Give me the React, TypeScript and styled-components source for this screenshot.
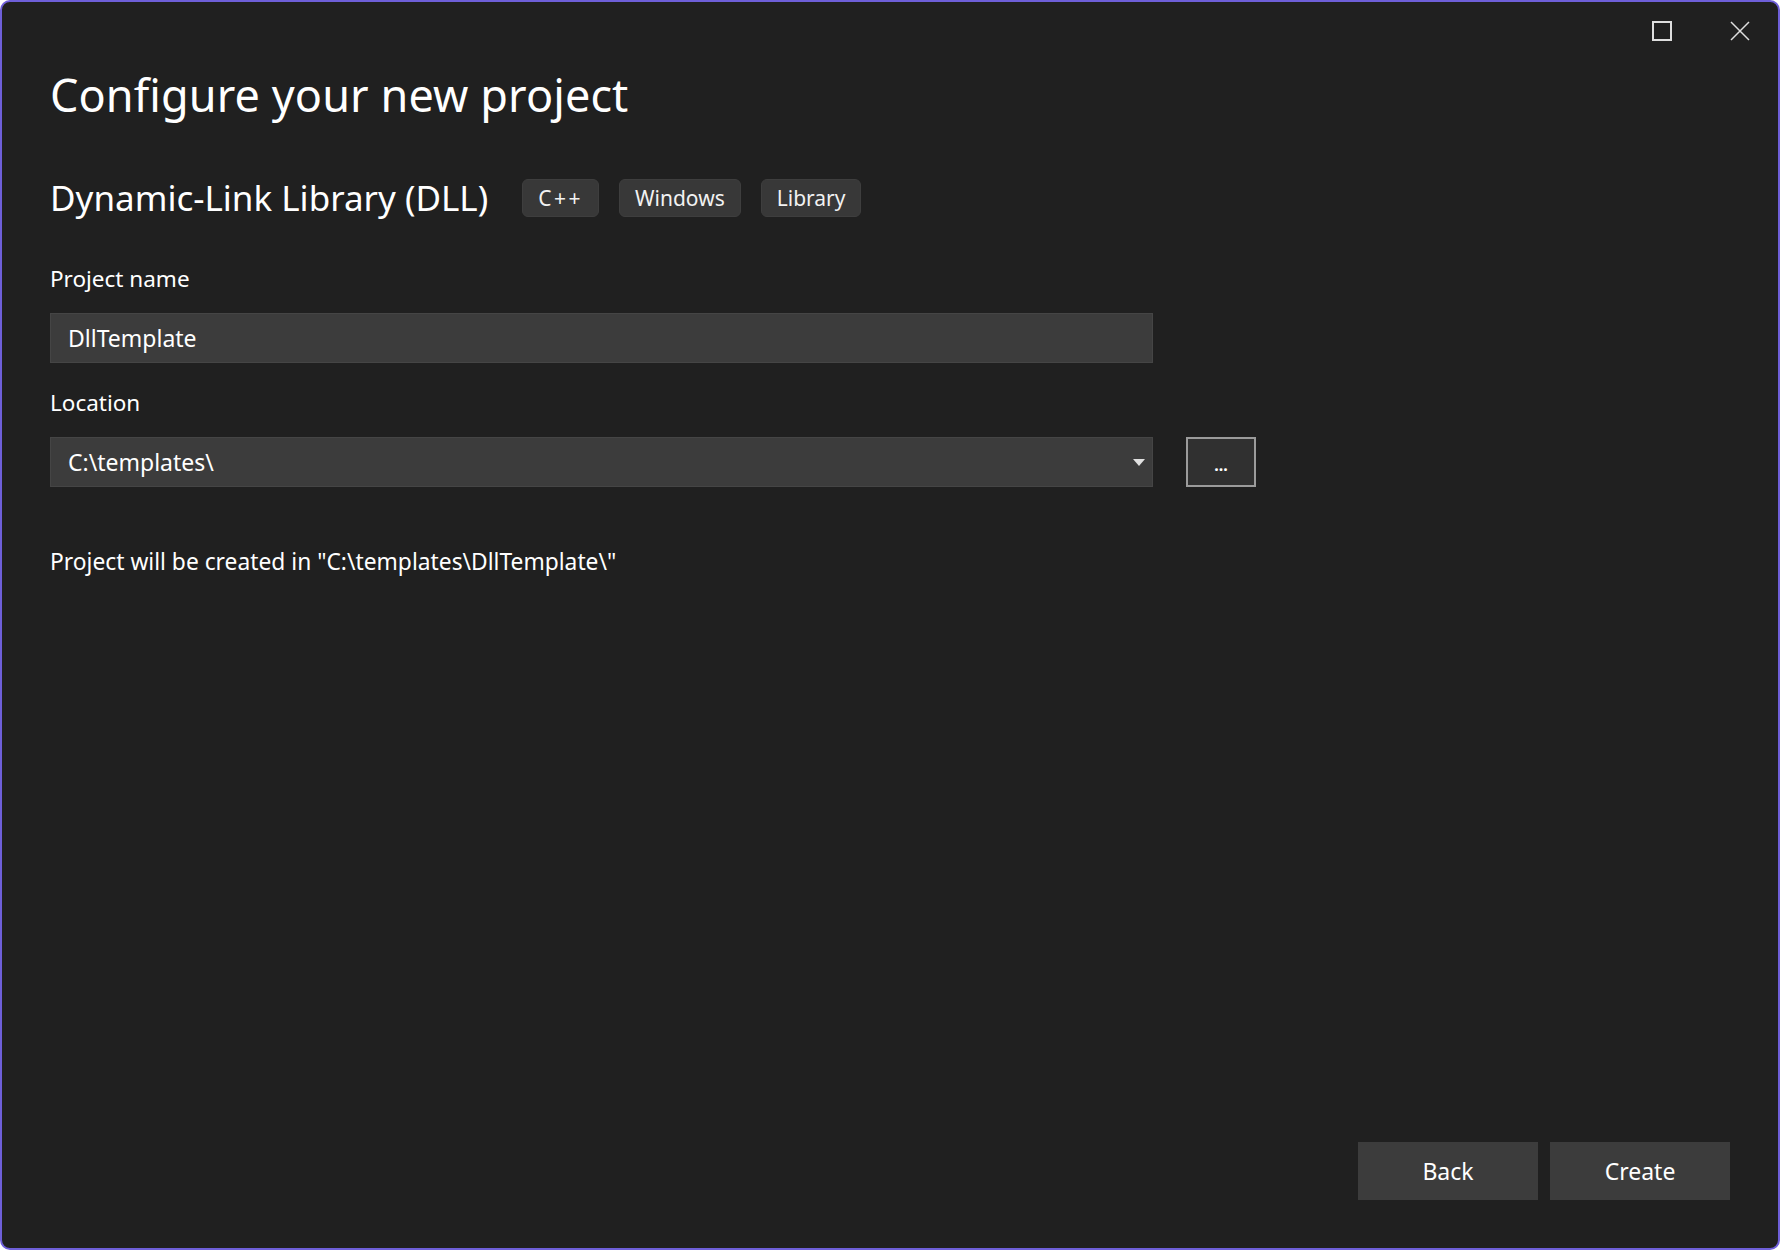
import React from "react";
import styled, { createGlobalStyle } from "styled-components";

const Global = createGlobalStyle`
  html, body { margin: 0; padding: 0; background: #ffffff; }
  * { box-sizing: border-box; }
  body { font-family: "Noto Sans", "Open Sans", "DejaVu Sans", sans-serif; }
`;

const Window = styled.div`
  width: 1780px;
  height: 1250px;
  background: #202020;
  border: 2px solid #6e5fd8;
  border-radius: 10px;
  display: flex;
  flex-direction: column;
  color: #ffffff;
  overflow: hidden;
`;

const TitleBar = styled.div`
  height: 58px;
  display: flex;
  justify-content: flex-end;
  align-items: stretch;
`;

const CaptionButton = styled.button<{ $w: number }>`
  width: ${(p) => p.$w}px;
  border: none;
  background: transparent;
  padding: 0;
  display: flex;
  align-items: center;
  justify-content: center;
  color: #dedede;
`;

const Content = styled.div`
  flex: 1;
  display: flex;
  flex-direction: column;
  padding: 0 48px 48px 48px;
`;

const Title = styled.h1`
  margin: 7px 0 0 0;
  font-size: 45px;
  line-height: 56px;
  font-weight: 400;
  letter-spacing: 0.1px;
  color: #ffffff;
`;

const HeaderRow = styled.div`
  margin-top: 53px;
  display: flex;
  align-items: center;
  height: 44px;
`;

const Subtitle = styled.h2`
  margin: 0 34px 0 0;
  font-size: 35px;
  line-height: 44px;
  font-weight: 400;
  color: #ffffff;
`;

const Tags = styled.div`
  display: flex;
  gap: 20px;
`;

const Tag = styled.span<{ $spacing?: number }>`
  height: 38px;
  padding: 0 15px;
  display: flex;
  align-items: center;
  background: #383838;
  border: 1px solid #3e3e3e;
  border-radius: 6px;
  font-size: 21px;
  letter-spacing: ${(p) => p.$spacing ?? 0}px;
  color: #f2f2f2;
`;

const Label = styled.div<{ $top: number }>`
  margin-top: ${(p) => p.$top}px;
  font-size: 22.5px;
  line-height: 30px;
  color: #ffffff;
`;

const FieldRow = styled.div`
  margin-top: 19px;
  display: flex;
  align-items: center;
  gap: 33px;
`;

const Field = styled.div`
  width: 1103px;
  height: 50px;
  background: #3c3c3c;
  border: 1px solid #454545;
  display: flex;
  align-items: center;
  padding: 0 7px 0 17px;
  font-size: 23px;
  color: #ffffff;
`;

const FieldText = styled.span`
  flex: 1;
`;

const Browse = styled.button`
  width: 70px;
  height: 50px;
  background: #303030;
  border: 2px solid #9b9b9b;
  color: #ffffff;
  font-family: "Noto Sans", sans-serif;
  font-size: 16px;
  font-weight: 700;
  padding: 6px 0 0 0;
  display: flex;
  align-items: center;
  justify-content: center;
`;

const Info = styled.div`
  margin-top: 60px;
  font-size: 22.8px;
  line-height: 30px;
  color: #ffffff;
`;

const Spacer = styled.div`
  flex: 1;
`;

const Footer = styled.div`
  display: flex;
  justify-content: flex-end;
  gap: 12px;
`;

const ActionButton = styled.button`
  width: 180px;
  height: 58px;
  background: #3c3c3c;
  border: none;
  color: #ffffff;
  font-family: "Noto Sans", sans-serif;
  font-size: 23px;
`;

export default function App() {
  return (
    <>
      <Global />
      <Window>
        <TitleBar>
          <CaptionButton $w={80} aria-label="Maximize">
            <svg width="20" height="20" viewBox="0 0 20 20">
              <rect x="1" y="1" width="18" height="18" fill="none" stroke="#dedede" strokeWidth="2" />
            </svg>
          </CaptionButton>
          <CaptionButton $w={76} aria-label="Close">
            <svg width="20" height="20" viewBox="0 0 20 20">
              <path d="M1 1 L19 19 M19 1 L1 19" stroke="#dedede" strokeWidth="1.5" fill="none" />
            </svg>
          </CaptionButton>
        </TitleBar>
        <Content>
          <Title>Configure your new project</Title>
          <HeaderRow>
            <Subtitle>Dynamic-Link Library (DLL)</Subtitle>
            <Tags>
              <Tag $spacing={2.5}>C++</Tag>
              <Tag>Windows</Tag>
              <Tag>Library</Tag>
            </Tags>
          </HeaderRow>
          <Label $top={44}>Project name</Label>
          <FieldRow>
            <Field>
              <FieldText>DllTemplate</FieldText>
            </Field>
          </FieldRow>
          <Label $top={25}>Location</Label>
          <FieldRow>
            <Field>
              <FieldText>C:\templates\</FieldText>
              <svg width="12" height="7" viewBox="0 0 12 7">
                <path d="M0 0 L12 0 L6 7 Z" fill="#e0e0e0" />
              </svg>
            </Field>
            <Browse>...</Browse>
          </FieldRow>
          <Info>Project will be created in "C:\templates\DllTemplate\"</Info>
          <Spacer />
          <Footer>
            <ActionButton>Back</ActionButton>
            <ActionButton>Create</ActionButton>
          </Footer>
        </Content>
      </Window>
    </>
  );
}
